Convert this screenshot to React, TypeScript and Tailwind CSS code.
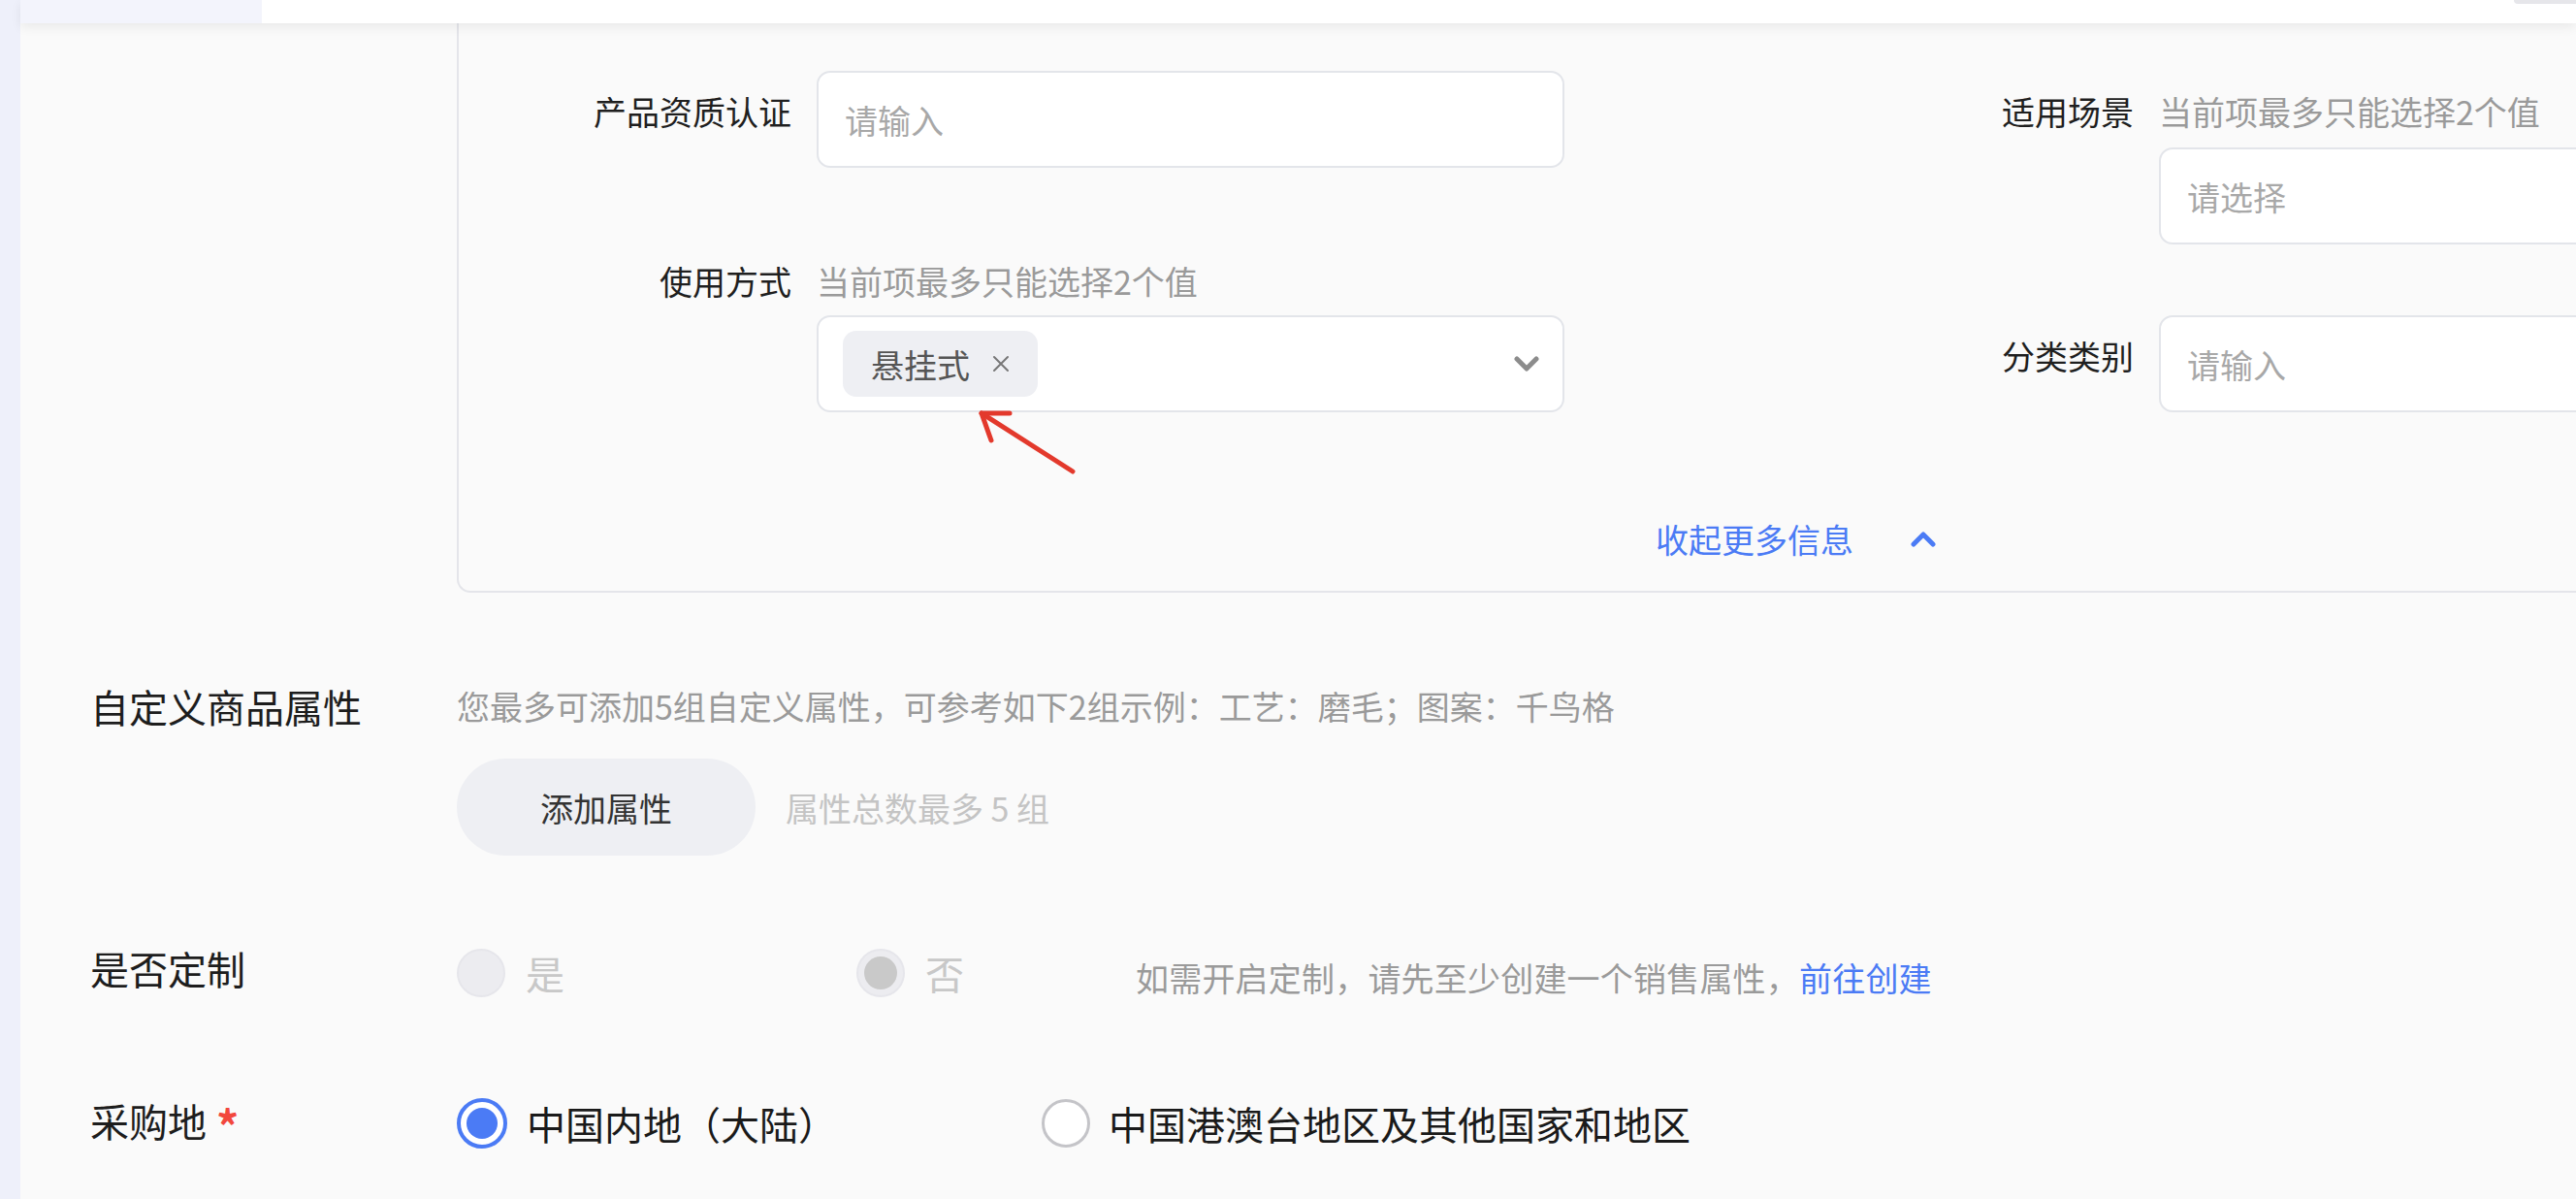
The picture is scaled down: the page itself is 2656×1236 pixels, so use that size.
import React from "react";

function ChevronDown({ color = "#8c8c8c" }: { color?: string }) {
  return (
    <svg width="26" height="16" viewBox="0 0 26 16">
      <path d="M3 3L13 13L23 3" fill="none" stroke={color} strokeWidth="5" strokeLinecap="round" strokeLinejoin="round" />
    </svg>
  );
}

function ChevronUp({ color = "#4b7bf5" }: { color?: string }) {
  return (
    <svg width="26" height="16" viewBox="0 0 26 16">
      <path d="M3 13L13 3L23 13" fill="none" stroke={color} strokeWidth="5" strokeLinecap="round" strokeLinejoin="round" />
    </svg>
  );
}

function PanelLabel({ children, pt = true }: { children: React.ReactNode; pt?: boolean }) {
  return (
    <div className={`w-[343px] shrink-0 text-right text-[34px] leading-[50px] text-[#1f1f1f] ${pt ? "pt-[17px]" : ""}`}>
      {children}
    </div>
  );
}

function Hint({ children }: { children: React.ReactNode }) {
  return <div className="text-[34px] leading-[50px] text-[#9a9a9a] whitespace-nowrap">{children}</div>;
}

function TextBox({ placeholder }: { placeholder: string }) {
  return (
    <div className="w-[771px] h-[100px] shrink-0 rounded-[14px] border-2 border-[#e3e5ea] bg-white flex items-center pl-[27px] text-[34px] text-[#a8a8a8]">
      {placeholder}
    </div>
  );
}

export default function App() {
  return (
    <div className="relative w-[2656px] h-[1236px] overflow-hidden bg-[#fafafa] flex font-['Noto_Sans_CJK_SC','PingFang_SC',sans-serif]">
      {/* left strip */}
      <div className="w-[21px] shrink-0 bg-[#eef0fa]" />

      <div className="flex-1 flex flex-col min-w-0">
        {/* top bar */}
        <div className="relative z-10 h-[24px] shrink-0 bg-white flex shadow-[0_4px_12px_rgba(0,0,0,0.07)]">
          <div className="w-[249px] bg-[#f3f4fc]" />
          <div className="flex-1" />
          <div className="w-[64px] h-[4px] rounded-bl-[4px] bg-[#e6e6ea]" />
        </div>

        {/* content */}
        <div className="pl-[72px]">
          {/* panel */}
          <div className="pl-[378px]">
            <div className="w-[2700px] bg-[#fafafa] border-l-2 border-b-2 border-[#e4e5ea] rounded-bl-[14px] pt-[49px] pb-[28px]">
              <div className="grid grid-cols-[1140px_1140px] gap-x-[244px] gap-y-[13px]">
                {/* row 1 left */}
                <div className="flex items-start">
                  <PanelLabel>产品资质认证</PanelLabel>
                  <div className="ml-[26px]">
                    <TextBox placeholder="请输入" />
                  </div>
                </div>
                {/* row 1 right */}
                <div className="flex items-start">
                  <PanelLabel>适用场景</PanelLabel>
                  <div className="ml-[26px] pt-[17px] flex flex-col">
                    <Hint>当前项最多只能选择2个值</Hint>
                    <div className="mt-[12px]">
                      <TextBox placeholder="请选择" />
                    </div>
                  </div>
                </div>
                {/* row 2 left */}
                <div className="flex items-start">
                  <PanelLabel pt={false}>使用方式</PanelLabel>
                  <div className="ml-[26px] flex flex-col">
                    <Hint>当前项最多只能选择2个值</Hint>
                    <div className="mt-[10px] w-[771px] h-[100px] rounded-[14px] border-2 border-[#e3e5ea] bg-white flex items-center pl-[25px] pr-[24px]">
                      <div className="h-[68px] rounded-[14px] bg-[#eeeff3] flex items-center pl-[29px] pr-[28px]">
                        <span className="text-[34px] text-[#555555]">悬挂式</span>
                        <svg className="ml-[22px]" width="20" height="20" viewBox="0 0 20 20">
                          <path d="M3 3L17 17M17 3L3 17" fill="none" stroke="#777777" strokeWidth="2" strokeLinecap="round" />
                        </svg>
                      </div>
                      <div className="flex-1" />
                      <ChevronDown />
                    </div>
                  </div>
                </div>
                {/* row 2 right */}
                <div className="flex items-start self-end">
                  <PanelLabel>分类类别</PanelLabel>
                  <div className="ml-[26px]">
                    <TextBox placeholder="请输入" />
                  </div>
                </div>
              </div>

              {/* collapse */}
              <div className="mt-[106px] ml-[1234px] flex items-center h-[50px]">
                <span className="text-[34px] leading-[50px] text-[#4b7bf5]">收起更多信息</span>
                <span className="ml-[59px] flex items-center">
                  <ChevronUp />
                </span>
              </div>
            </div>
          </div>

          {/* 自定义商品属性 */}
          <div className="mt-[89px] flex items-start">
            <div className="w-[378px] shrink-0 text-[40px] leading-[56px] text-[#1d1d1d]">自定义商品属性</div>
            <div className="flex flex-col">
              <div className="text-[34px] leading-[56px] text-[#9a9a9a] whitespace-nowrap">
                您最多可添加5组自定义属性，可参考如下2组示例：工艺：磨毛；图案：千鸟格
              </div>
              <div className="mt-[26px] flex items-center">
                <div className="w-[308px] h-[100px] rounded-full bg-[#eeeff3] flex items-center justify-center text-[34px] text-[#333333]">
                  添加属性
                </div>
                <div className="ml-[31px] text-[34px] text-[#c4c4c4] whitespace-pre">属性总数最多 5 组</div>
              </div>
            </div>
          </div>

          {/* 是否定制 */}
          <div className="mt-[88px] flex items-start">
            <div className="w-[378px] shrink-0 text-[40px] leading-[56px] text-[#1d1d1d]">是否定制</div>
            <div className="pt-[8px] flex items-center h-[58px]">
              <div className="w-[412px] flex items-center">
                <div className="w-[50px] h-[50px] rounded-full bg-[#ececf0] border-2 border-[#e6e6eb]" />
                <span className="ml-[21px] text-[40px] text-[#c8c8c8]">是</span>
              </div>
              <div className="w-[288px] flex items-center">
                <div className="w-[50px] h-[50px] rounded-full bg-[#ececf0] border-2 border-[#e6e6eb] flex items-center justify-center">
                  <div className="w-[34px] h-[34px] rounded-full bg-[#c9c9c9]" />
                </div>
                <span className="ml-[21px] text-[40px] text-[#c8c8c8]">否</span>
              </div>
              <div className="text-[34px] text-[#9a9a9a] whitespace-nowrap pt-[8px] tracking-[0.2px]">
                如需开启定制，请先至少创建一个销售属性，<span className="text-[#4b7bf5]">前往创建</span>
              </div>
            </div>
          </div>

          {/* 采购地 */}
          <div className="mt-[99px] flex items-start">
            <div className="w-[378px] shrink-0 text-[40px] leading-[56px] text-[#1d1d1d] flex items-start">
              <span>采购地</span>
              <span className="ml-[10px] text-[#f2473d] text-[46px] leading-[56px] pt-[4px] font-bold">*</span>
            </div>
            <div className="pt-[6px] flex items-center h-[56px]">
              <div className="w-[603px] flex items-center">
                <div className="w-[52px] h-[52px] rounded-full border-[4px] border-[#4b7bf5] bg-white flex items-center justify-center">
                  <div className="w-[32px] h-[32px] rounded-full bg-[#4b7bf5]" />
                </div>
                <span className="ml-[20px] text-[40px] text-[#1a1a1a] whitespace-nowrap">中国内地（大陆）</span>
              </div>
              <div className="flex items-center">
                <div className="w-[50px] h-[50px] rounded-full border-[3px] border-[#c4c4c8] bg-white" />
                <span className="ml-[19px] text-[40px] text-[#1a1a1a] whitespace-nowrap">中国港澳台地区及其他国家和地区</span>
              </div>
            </div>
          </div>
        </div>
      </div>

      {/* red annotation arrow */}
      <svg className="absolute left-0 top-0 pointer-events-none" width="2656" height="1236" viewBox="0 0 2656 1236">
        <g fill="none" stroke="#e3392c" strokeWidth="5" strokeLinecap="round" strokeLinejoin="round">
          <path d="M1106 486L1012 426" />
          <path d="M1041 426L1012 426L1022 454" />
        </g>
      </svg>
    </div>
  );
}
